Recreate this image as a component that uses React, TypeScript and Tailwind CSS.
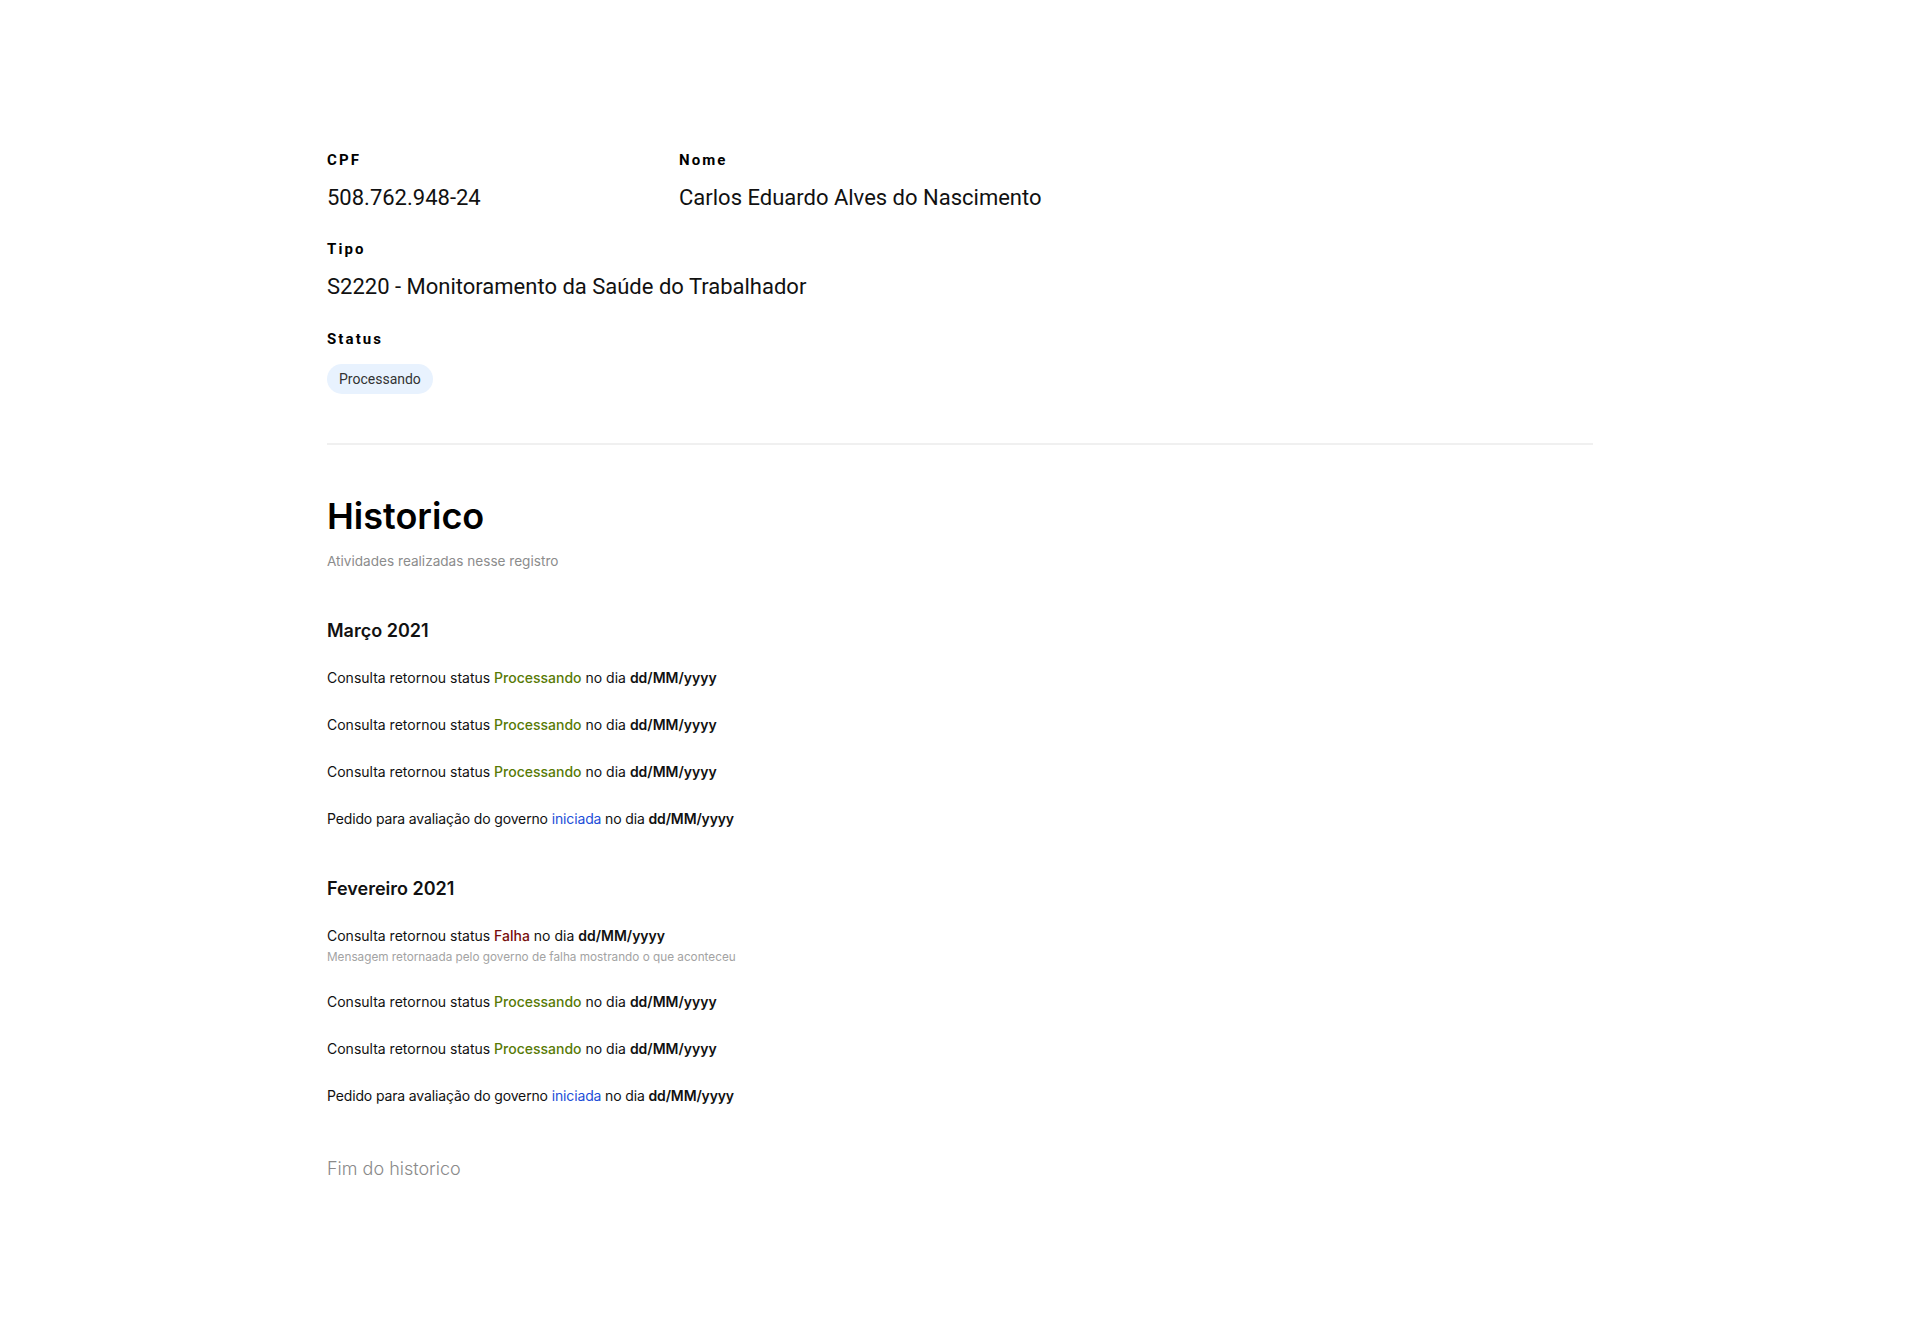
const marco = [
  { kind: 'consulta', status: 'Processando' },
  { kind: 'consulta', status: 'Processando' },
  { kind: 'consulta', status: 'Processando' },
  { kind: 'pedido' },
];

const fevereiro = [
  { kind: 'consulta', status: 'Falha', message: 'Mensagem retornaada pelo governo de falha mostrando o que aconteceu' },
  { kind: 'consulta', status: 'Processando' },
  { kind: 'consulta', status: 'Processando' },
  { kind: 'pedido' },
];

type Entry = { kind: string; status?: string; message?: string };

function Field({ label, value }: { label: string; value: string }) {
  return (
    <div>
      <p className="text-[15px] leading-[20px] font-bold tracking-[0.14em] text-black">{label}</p>
      <p className="mt-[14px] text-[22px] leading-[28px] text-[#111]">{value}</p>
    </div>
  );
}

function HistoryItem({ entry }: { entry: Entry }) {
  if (entry.kind === 'pedido') {
    return (
      <div className="mt-[27px]">
        <p className="text-[14px] leading-[20px] tracking-[-0.01em] text-[#111]">
          Pedido para avaliação do governo <span className="text-[#1d4ed8]">iniciada</span> no dia{' '}
          <span className="font-semibold">dd/MM/yyyy</span>
        </p>
      </div>
    );
  }
  const isFail = entry.status === 'Falha';
  return (
    <div className="mt-[27px]">
      <p className="text-[14px] leading-[20px] text-[#111]">
        Consulta retornou status{' '}
        <span className={isFail ? 'text-[#780d0d] font-medium' : 'text-[#587a06] font-medium'}>{entry.status}</span> no dia{' '}
        <span className="font-semibold">dd/MM/yyyy</span>
      </p>
      {entry.message && <p className="mt-[3px] text-[11.75px] leading-[16px] text-[#a3a3a3]">{entry.message}</p>}
    </div>
  );
}

function Month({ title, entries }: { title: string; entries: Entry[] }) {
  return (
    <div className="mt-[48px]">
      <h3 className="text-[18px] leading-[24px] font-semibold text-[#111]">{title}</h3>
      <div className="-mt-[2px]">
        {entries.map((e, i) => (
          <HistoryItem key={i} entry={e} />
        ))}
      </div>
    </div>
  );
}

export default function App() {
  return (
    <div className="min-h-screen bg-white">
      <div className="mx-auto w-[1266px] pt-[150px] pb-[160px]">
        <section className="font-['Roboto',sans-serif]">
          <div className="flex">
            <div className="w-[352px]">
              <Field label="CPF" value="508.762.948-24" />
            </div>
            <Field label="Nome" value="Carlos Eduardo Alves do Nascimento" />
          </div>
          <div className="mt-[27px]">
            <Field label="Tipo" value="S2220 - Monitoramento da Saúde do Trabalhador" />
          </div>
          <div className="mt-[28px]">
            <p className="text-[15px] leading-[20px] font-bold tracking-[0.14em] text-black">Status</p>
            <span className="mt-[15px] inline-flex h-[30px] items-center rounded-full bg-[#e8f2fe] px-3 text-[14px] text-[#333]">
              Processando
            </span>
          </div>
          <div className="mt-[49px] h-[2px] bg-[#f0f0f0]" />
        </section>

        <section className="font-['Inter',sans-serif]">
          <h2 className="mt-[51px] text-[36px] leading-[40px] font-semibold text-black">Historico</h2>
          <p className="mt-[15px] text-[13.6px] leading-[20px] text-[#8c8c8c]">Atividades realizadas nesse registro</p>
          <Month title="Março 2021" entries={marco} />
          <Month title="Fevereiro 2021" entries={fevereiro} />
          <p className="mt-[51px] text-[18px] leading-[24px] font-light text-[#8a8a8a]">Fim do historico</p>
        </section>
      </div>
    </div>
  );
}
